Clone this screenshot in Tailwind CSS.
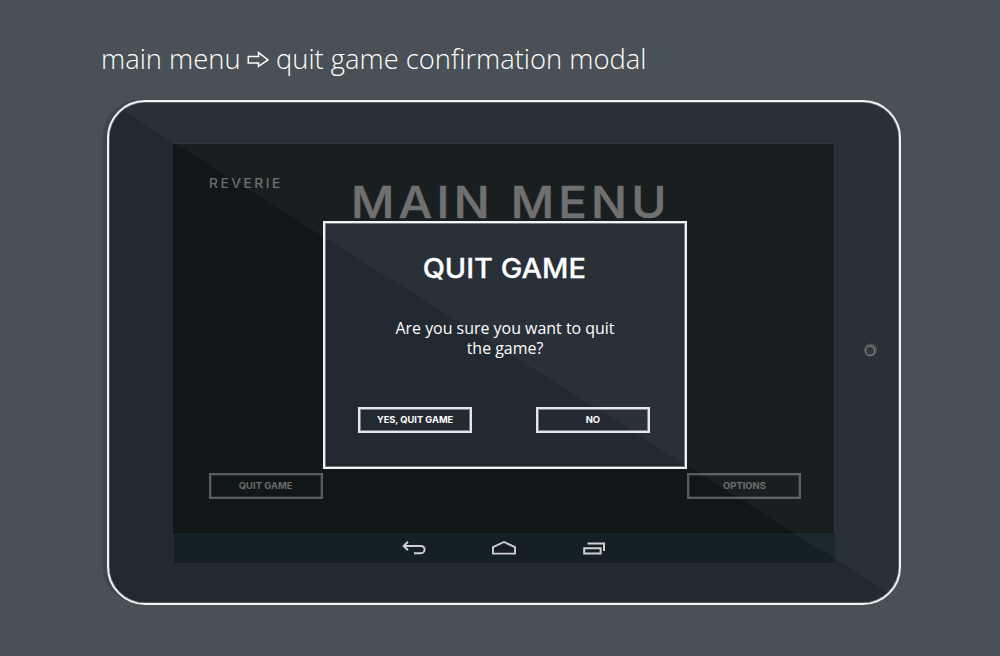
<!DOCTYPE html>
<html lang="en">
<head>
<meta charset="utf-8">
<title>Reverie – quit game</title>
<script src="https://cdn.jsdelivr.net/npm/@tailwindcss/browser@4"></script>
</head>
<body class="w-[1000px] h-[656px] overflow-hidden bg-[#495056] font-['Open_Sans',sans-serif]">
<h1 class="flex items-center h-[60px] mt-[29px] pl-[101px] text-[27.35px] font-light text-white whitespace-nowrap">
  <span class="w-[139px]">main menu</span>
  <svg class="ml-[7px] mr-[6px]" width="23" height="18" viewBox="0 0 23 18" fill="none" stroke="#fff" stroke-width="1.5"><path d="M1.3 6.6H11.5V2.6L21 9.9L11.5 16.4V13H1.3Z"/></svg>
  <span>quit game confirmation modal</span>
</h1>
<main class="relative ml-[107px] mt-[11px] w-[794px] h-[505px] rounded-[38px] border-2 border-[#f2f2f2] bg-[#222931] shadow-[-5px_-1px_0_-0.5px_#3d4750,inset_0_0_0_0.5px_#8b9094]">
  <div class="pl-[64px] pt-[42px]">
    <section class="w-[661px] h-[389px] bg-[#111719] border-b border-[#0b0f11] flex flex-col justify-between shadow-[1px_-1px_0_#26323a]">
      <div class="flex pl-[36px]">
        <p class="w-[142px] pt-[31px] text-[12.5px] leading-[18px] font-medium text-[#6c6c6c] font-[Inter,sans-serif]"><span class="inline-block origin-left scale-x-110 tracking-[2.3px]">REVERIE</span></p>
        <h2 class="pt-[30px] text-[44px] leading-[56px] font-medium text-[#6b6b6b] font-[Inter,sans-serif] whitespace-nowrap [-webkit-text-stroke:0.5px_#6b6b6b]"><span class="inline-block origin-left scale-x-108 tracking-[3.9px]">MAIN MENU</span></h2>
      </div>
      <div class="flex justify-between pl-[36px] pr-[33px] pb-[33px] font-[Inter,sans-serif] text-[9px] font-bold text-[#6a6a6a]">
        <button class="w-[114px] h-[26px] border-2 border-[#5b5b5b] shadow-[inset_0_0_0_1px_#2b2f31]"><span class="inline-block scale-x-105">QUIT GAME</span></button>
        <button class="w-[114px] h-[26px] border-2 border-[#5b5b5b] shadow-[inset_0_0_0_1px_#2b2f31]"><span class="inline-block scale-x-105">OPTIONS</span></button>
      </div>
    </section>
    <nav class="ml-[1px] w-[661px] h-[30px] bg-[#152026] flex items-center pl-[228px]">
      <svg width="24" height="16" viewBox="0 0 24 16" fill="none" stroke="#d0d0d0" stroke-width="2"><path d="M6 1.7L1.7 6L6 10.3M2 6H19A3.6 3.6 0 0 1 19 13.2H12"/></svg>
      <svg class="ml-[65px]" width="26" height="16" viewBox="0 0 26 16" fill="none" stroke="#d0d0d0" stroke-width="1.9"><path d="M2 13.6V7.2L13 2L24 7.2V13.6Z"/></svg>
      <svg class="ml-[65px]" width="24" height="16" viewBox="0 0 24 16" fill="none" stroke="#d0d0d0" stroke-width="2"><path d="M2.2 8.2H18.6V13.4H2.2ZM5.5 3.4H22V11"/></svg>
    </nav>
  </div>
  <div class="absolute left-[214px] top-[119px] w-[364px] h-[248px] border-2 border-[#f2f2f2] bg-[#222931] shadow-[inset_0_0_0_1px_#6f757a] flex flex-col items-center text-white">
    <h3 class="pt-[26px] text-[27px] leading-[40px] font-medium font-[Inter,sans-serif] [-webkit-text-stroke:0.3px_white]"><span class="inline-block -translate-x-px scale-x-107">QUIT GAME</span></h3>
    <p class="mt-[30px] text-[15.95px] leading-[19.5px] text-center">Are you sure you want to quit<br>the game?</p>
    <div class="mt-[49px] mr-[2px] flex gap-[64px] font-[Inter,sans-serif] text-[9px] font-bold">
      <button class="w-[114px] h-[26px] border-2 border-[#e6e6e6] shadow-[inset_0_0_0_1px_#7d8286]"><span class="inline-block scale-x-103">YES, QUIT GAME</span></button>
      <button class="w-[114px] h-[26px] border-2 border-[#e6e6e6] shadow-[inset_0_0_0_1px_#7d8286]"><span class="inline-block scale-x-105">NO</span></button>
    </div>
  </div>
  <svg class="absolute left-[753px] top-[240px]" width="16" height="16" viewBox="0 0 16 16"><circle cx="8.6" cy="8" r="6.4" fill="#444b50"/><circle cx="8" cy="8.8" r="4.6" fill="#2c3135" stroke="#777" stroke-width="1.3"/></svg>
  <div class="absolute inset-0 rounded-[36px] bg-white/[.035] pointer-events-none [clip-path:polygon(10px_6px,0px_0px,100%_0px,100%_100%,787px_495px)]"></div>
</main>
</body>
</html>
